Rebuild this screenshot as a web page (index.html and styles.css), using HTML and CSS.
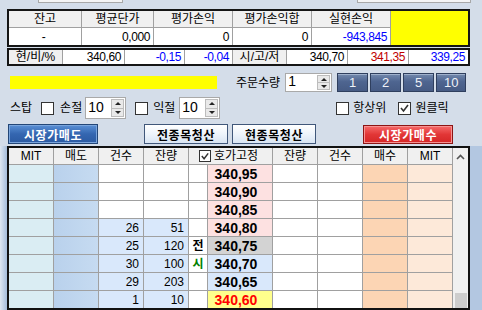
FILE: index.html
```html
<!DOCTYPE html>
<html lang="ko">
<head>
  <meta charset="UTF-8">
  <meta name="viewport" content="width=device-width, initial-scale=1.0">
  <title>주문</title>
  <link rel="stylesheet" href="styles.css">
</head>
<body>

<div class="stubs">
  <div class="stub stub-a"></div>
  <div class="stub stub-b"></div>
</div>

<!-- 잔고 요약 -->
<div class="summary">
  <div class="flag"></div>
  <div class="hd">잔고</div>
  <div class="hd">평균단가</div>
  <div class="hd">평가손익</div>
  <div class="hd">평가손익합</div>
  <div class="hd">실현손익</div>
  <div class="val center">-</div>
  <div class="val">0,000</div>
  <div class="val">0</div>
  <div class="val">0</div>
  <div class="val blue">-943,845</div>
</div>

<div class="quote">
  <div class="lbl">현/비/%</div>
  <div class="val">340,60</div>
  <div class="val blue">-0,15</div>
  <div class="val blue">-0,04</div>
  <div class="lbl">시/고/저</div>
  <div class="val">340,70</div>
  <div class="val red">341,35</div>
  <div class="val blue">339,25</div>
</div>

<!-- 주문수량 -->
<div class="ctl ctl-qty">
  <div class="ybar"></div>
  <span class="qty-label">주문수량</span>
  <div class="spin spin-qty">
    <span class="spin-val">1</span>
    <span class="spin-btns"><i class="up"></i><i class="dn"></i></span>
  </div>
  <div class="qbtns">
    <button class="qbtn">1</button>
    <button class="qbtn">2</button>
    <button class="qbtn">5</button>
    <button class="qbtn last">10</button>
  </div>
</div>

<!-- 스탑 -->
<div class="ctl ctl-stop">
  <span class="txt">스탑</span>
  <span class="chk m-chk1"></span>
  <span class="txt m-t1">손절</span>
  <div class="spin spin-stop m-s1">
    <span class="spin-val">10</span>
    <span class="spin-btns"><i class="up"></i><i class="dn"></i></span>
  </div>
  <span class="chk m-chk2"></span>
  <span class="txt m-t2">익절</span>
  <div class="spin spin-stop m-s2">
    <span class="spin-val">10</span>
    <span class="spin-btns"><i class="up"></i><i class="dn"></i></span>
  </div>
  <span class="chk m-chk3"></span>
  <span class="txt m-t3">항상위</span>
  <span class="chk m-chk4"><svg width="11" height="11" viewBox="0 0 11 11"><polyline points="2,5 4.5,8 9,2" fill="none" stroke="#333" stroke-width="1.6"/></svg></span>
  <span class="txt m-t3">원클릭</span>
</div>

<!-- 주문 버튼 -->
<div class="ctl ctl-btns">
  <button class="big btn-sell">시장가매도</button>
  <button class="big btn-plain m-b1">전종목청산</button>
  <button class="big btn-plain m-b2">현종목청산</button>
  <button class="big btn-buy m-b3">시장가매수</button>
</div>

<!-- 호가창 -->
<div class="book-wrap">
  <div class="book">
    <div class="grid">
      <div class="h">MIT</div>
      <div class="h">매도</div>
      <div class="h">건수</div>
      <div class="h">잔량</div>
      <div class="h h-fix"><span class="chk small"><svg width="11" height="11" viewBox="0 0 11 11"><polyline points="2,5 4.5,8 9,2" fill="none" stroke="#333" stroke-width="1.6"/></svg></span>호가고정</div>
      <div class="h">잔량</div>
      <div class="h">건수</div>
      <div class="h">매수</div>
      <div class="h">MIT</div>

      <div class="c mit-s"></div><div class="c col-sell"></div><div class="c num"></div><div class="c num"></div><div class="c mark"></div><div class="c px ask">340,95</div><div class="c num"></div><div class="c num"></div><div class="c col-buy"></div><div class="c mit-b"></div>
      <div class="c mit-s"></div><div class="c col-sell"></div><div class="c num"></div><div class="c num"></div><div class="c mark"></div><div class="c px ask">340,90</div><div class="c num"></div><div class="c num"></div><div class="c col-buy"></div><div class="c mit-b"></div>
      <div class="c mit-s"></div><div class="c col-sell"></div><div class="c num"></div><div class="c num"></div><div class="c mark"></div><div class="c px ask">340,85</div><div class="c num"></div><div class="c num"></div><div class="c col-buy"></div><div class="c mit-b"></div>
      <div class="c mit-s"></div><div class="c col-sell"></div><div class="c num fill">26</div><div class="c num fill">51</div><div class="c mark"></div><div class="c px ask">340,80</div><div class="c num"></div><div class="c num"></div><div class="c col-buy"></div><div class="c mit-b"></div>
      <div class="c mit-s"></div><div class="c col-sell"></div><div class="c num fill">25</div><div class="c num fill">120</div><div class="c mark">전</div><div class="c px prev">340,75</div><div class="c num"></div><div class="c num"></div><div class="c col-buy"></div><div class="c mit-b"></div>
      <div class="c mit-s"></div><div class="c col-sell"></div><div class="c num fill">30</div><div class="c num fill">100</div><div class="c mark green">시</div><div class="c px bid">340,70</div><div class="c num"></div><div class="c num"></div><div class="c col-buy"></div><div class="c mit-b"></div>
      <div class="c mit-s"></div><div class="c col-sell"></div><div class="c num fill">29</div><div class="c num fill">203</div><div class="c mark"></div><div class="c px bid">340,65</div><div class="c num"></div><div class="c num"></div><div class="c col-buy"></div><div class="c mit-b"></div>
      <div class="c mit-s"></div><div class="c col-sell"></div><div class="c num fill">1</div><div class="c num fill">10</div><div class="c mark"></div><div class="c px now">340,60</div><div class="c num"></div><div class="c num"></div><div class="c col-buy"></div><div class="c mit-b"></div>
    </div>
    <div class="vscroll">
      <span class="arrow"><svg width="9" height="6" viewBox="0 0 9 6"><polyline points="1,5 4.5,1.5 8,5" fill="none" stroke="#555" stroke-width="1.6"/></svg></span>
      <span class="thumb"></span>
    </div>
  </div>
</div>

</body>
</html>
```

FILE: styles.css
```css
* {
  box-sizing: border-box;
}
body {
  margin: 0;
  width: 482px;
  height: 310px;
  overflow: hidden;
  background: #d4dde9;
  color: #000;
  font-family: "Liberation Sans", "Noto Sans CJK KR", sans-serif;
  font-size: 12px;
}
button {
  font-family: inherit;
  padding: 0;
  cursor: pointer;
}

/* partial inputs above */
.stubs {
  display: flex;
  height: 9px;
}
.stub {
  height: 3px;
  background: #f4f4f4;
  border: 1px solid #a8a8a8;
  border-top: 0;
}
.stub-a {
  margin-left: 38px;
  width: 85px;
}
.stub-b {
  margin-left: 234px;
  width: 114px;
}

/* summary */
.summary,
.quote {
  display: grid;
  gap: 1px;
  margin-left: 7px;
  width: 463px;
  border: 2px solid #151515;
  background: #a0a0a0;
}
.summary {
  grid-template-columns: 72px 71px 78px 78px 78px 77px;
  grid-template-rows: 16px 17px;
}
.quote {
  margin-top: 1px;
  grid-template-columns: 53px 61px 59px 47px 53px 60px 60px 59px;
  grid-template-rows: 14px;
}
.hd,
.lbl {
  display: flex;
  align-items: center;
  justify-content: center;
  background: #f0f0f0;
  line-height: 14px;
}
.val {
  display: flex;
  align-items: center;
  justify-content: flex-end;
  padding-right: 3px;
  background: #fff;
  line-height: 14px;
  letter-spacing: -0.4px;
}
.val.center {
  justify-content: center;
}
.flag {
  grid-column: 6;
  grid-row: 1 / span 2;
  background: #ffff00;
}
.blue {
  color: #0000ff;
}
.red {
  color: #c00000;
}

/* control rows */
.ctl {
  display: flex;
  align-items: center;
}
.ctl-qty {
  margin-top: 7px;
  height: 19px;
  padding-left: 10px;
}
.ybar {
  width: 207px;
  height: 13px;
  background: #ffff00;
}
.qty-label {
  margin-left: 19px;
  line-height: 14px;
}
.spin {
  display: flex;
  background: #fff;
  border: 1px solid #a9a9a9;
}
.spin-val {
  flex: 1;
  padding-left: 2px;
  font-size: 14px;
  line-height: 14px;
}
.spin-btns {
  display: flex;
  flex-direction: column;
  width: 13px;
  margin: 1px;
  border: 1px solid #bcbcbc;
  background: #e9e9e9;
}
.spin-btns i {
  flex: 1;
  display: flex;
  align-items: center;
  justify-content: center;
}
.spin-btns i::before {
  content: "";
  border-left: 3px solid transparent;
  border-right: 3px solid transparent;
}
.spin-btns .up {
  border-bottom: 1px solid #bcbcbc;
}
.spin-btns .up::before {
  border-bottom: 3px solid #222;
}
.spin-btns .dn::before {
  border-top: 3px solid #222;
}
.spin-qty {
  margin-left: 5px;
  width: 47px;
  height: 19px;
}
.qbtns {
  display: flex;
  gap: 2px;
  margin-left: 5px;
}
.qbtn {
  width: 31px;
  height: 19px;
  border: 1px solid #2f3f5e;
  background: linear-gradient(#7389ad, #4e6590 45%, #465b84);
  box-shadow: inset 0 1px 0 #9fb1cc;
  color: #eef2f8;
  font-size: 13px;
}
.qbtn.last {
  width: 30px;
}

.ctl-stop {
  margin-top: 5px;
  height: 22px;
  padding-left: 10px;
}
.txt {
  line-height: 14px;
}
.chk {
  display: flex;
  align-items: center;
  justify-content: center;
  width: 13px;
  height: 13px;
  background: #fff;
  border: 1px solid #333;
}
.m-chk1 { margin-left: 9px; }
.m-t1 { margin-left: 6px; }
.m-s1 { margin-left: 3px; }
.m-chk2 { margin-left: 9px; }
.m-t2 { margin-left: 5px; }
.m-s2 { margin-left: 4px; }
.m-chk3 { margin-left: 116px; }
.m-chk4 { margin-left: 12px; }
.m-t3 { margin-left: 4px; }
.spin-stop {
  width: 41px;
  height: 22px;
}
.spin-stop .spin-val {
  padding-top: 2px;
}

.ctl-btns {
  margin-top: 5px;
  height: 20px;
  padding-left: 8px;
}
.big {
  height: 20px;
  font-size: 12px;
  font-weight: bold;
  letter-spacing: 0.6px;
}
.btn-sell {
  width: 90px;
  border: 1px solid #234677;
  background: linear-gradient(#5a90d6, #3466b0 50%, #2b5aa2);
  box-shadow: inset 0 0 0 1px #79a4dc;
  color: #fff;
}
.btn-plain {
  width: 84px;
  border: 1px solid #40577a;
  background: linear-gradient(#ffffff, #eef4fb 50%, #d9e5f3);
  color: #000;
}
.btn-buy {
  width: 90px;
  height: 19px;
  border: 1px solid #8c1414;
  background: linear-gradient(#f66a6a, #e23636 50%, #d42626);
  box-shadow: inset 0 0 0 1px #f79292;
  color: #fff;
}
.m-b1 { margin-left: 46px; }
.m-b2 { margin-left: 4px; }
.m-b3 { margin-left: 47px; }

/* order book */
.book-wrap {
  margin-top: 2px;
  padding-left: 7px;
  background: linear-gradient(90deg, #dfe7f1 0, #a6bddb 7px, #b3c7e1 7px, #b3c7e1 100%);
}
.book {
  display: flex;
  gap: 1px;
  width: 463px;
  border: 2px solid #111;
  background: #a0a0a0;
}
.grid {
  display: grid;
  grid-template-columns: 44px 44px 44px 44px 18px 64px 44px 44px 44px 44px;
  grid-template-rows: 16px;
  grid-auto-rows: 17px;
  gap: 1px;
}
.h {
  display: flex;
  align-items: center;
  justify-content: center;
  background: #f0f0f0;
  line-height: 14px;
}
.h-fix {
  grid-column: span 2;
  gap: 3px;
  padding-right: 4px;
}
.chk.small {
  width: 12px;
  height: 12px;
}
.c {
  display: flex;
  align-items: center;
  background: #fff;
  line-height: 14px;
}
.mit-s {
  background: #daedf3;
}
.col-sell {
  background: linear-gradient(90deg, #b9d1ec, #c6dbf1);
}
.num {
  justify-content: flex-end;
  padding-right: 4px;
}
.num.fill {
  background: #d9e8fb;
}
.mark {
  justify-content: center;
  font-weight: bold;
}
.green {
  color: #008000;
}
.px {
  justify-content: center;
  padding-right: 8px;
  font-size: 14px;
  font-weight: bold;
}
.ask {
  background: #fde1e1;
}
.prev {
  background: #d3d3d3;
}
.bid {
  background: #d9e8fb;
}
.now {
  background: #ffff8c;
  color: #ff0000;
}
.col-buy {
  background: #fcd5b4;
}
.mit-b {
  background: #fde9d9;
}
.vscroll {
  display: flex;
  flex-direction: column;
  justify-content: space-between;
  width: 15px;
  background: #f0f0f0;
}
.arrow {
  display: flex;
  justify-content: center;
  padding-top: 6px;
  height: 16px;
}
.thumb {
  height: 15px;
  margin: 0 1px 0 2px;
  background: #cdcdcd;
}
```
